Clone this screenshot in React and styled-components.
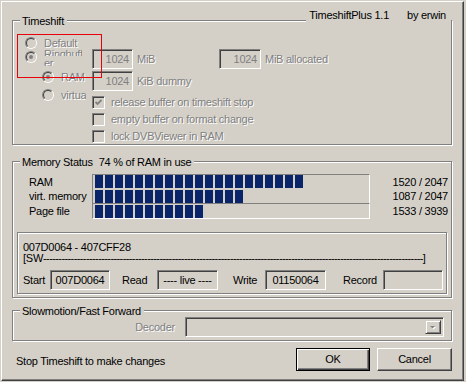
import React from 'react';
import styled, { createGlobalStyle, css } from 'styled-components';

const BG = '#d4d0c8';

const Global = createGlobalStyle`
  html, body { margin: 0; padding: 0; background: ${BG}; }
  body {
    font-family: "Liberation Sans", Arial, sans-serif;
    font-size: 11px;
    letter-spacing: -0.25px;
    color: #000;
  }
  #root { width: 466px; height: 382px; }
`;

const sunken = css`
  box-sizing: border-box;
  border: 1px solid;
  border-color: #808080 #fff #fff #808080;
  box-shadow: inset 1px 1px 0 #404040, inset -1px -1px 0 ${BG};
  background: ${BG};
`;

const etched = css`
  box-sizing: border-box;
  border: 1px solid #808080;
  box-shadow: inset 1px 1px 0 #fff, 1px 1px 0 #fff;
`;

const Screen = styled.div`
  width: 466px;
  height: 382px;
  box-sizing: border-box;
  padding: 1px 0 0 1px;
  background: ${BG};
`;

const Panel = styled.div`
  width: 463px;
  height: 380px;
  box-sizing: border-box;
  border-style: solid;
  border-width: 1px;
  border-color: #fff #404040 #404040 #fff;
  box-shadow: inset -1px -1px 0 #808080;
  padding: 18px 10px 0 10px;
  display: flex;
  flex-direction: column;
`;

const Group = styled.div`
  ${etched};
  position: relative;
  width: 440px;
  height: ${p => p.$h}px;
  margin-top: ${p => p.$mt || 0}px;
  flex: none;
`;

const Legend = styled.div`
  position: absolute;
  top: -7px;
  left: 7px;
  padding: 0 3px 0 2px;
  line-height: 14px;
  background: ${BG};
  white-space: nowrap;
  display: flex;
  gap: 6px;
`;

const TitleTag = styled.div`
  position: absolute;
  top: -13px;
  right: 0;
  padding: 0 5px 0 3px;
  line-height: 14px;
  background: ${BG};
  white-space: nowrap;
  display: flex;
  gap: 18px;
`;

const Highlight = styled.div`
  position: absolute;
  left: 4px;
  top: 13px;
  width: 85px;
  height: 44px;
  box-sizing: border-box;
  border: 1px solid #e8000b;
  pointer-events: none;
`;

const Label = styled.span`
  box-sizing: border-box;
  white-space: nowrap;
  line-height: 13px;
  flex: none;
  ${p => p.$disabled && css`color: #808080; text-shadow: 1px 1px 0 #fff;`}
  ${p => p.$w && css`width: ${p.$w}px;`}
  ${p => p.$pl && css`padding-left: ${p.$pl}px;`}
  ${p => p.$clip && css`overflow: hidden;`}
`;

/* ---------- Timeshift group ---------- */

const TimeshiftBody = styled.div`
  display: flex;
  align-items: flex-start;
  padding: 15px 0 0 12px;
`;

const RadioCol = styled.div`
  width: 67px;
  flex: none;
  display: flex;
  flex-direction: column;
`;

const RadioRow = styled.div`
  height: 14px;
  display: flex;
  align-items: center;
  gap: 7px;
  margin-top: ${p => p.$mt || 0}px;
  padding-left: ${p => p.$indent || 0}px;
`;

const RadioOuter = styled.span`
  flex: none;
  width: 12px;
  height: 12px;
  box-sizing: border-box;
  border-radius: 50%;
  border: 1px solid;
  border-color: #808080 #fff #fff #808080;
  display: flex;
`;

const RadioInner = styled.span`
  flex: 1;
  border-radius: 50%;
  border: 1px solid;
  border-color: #404040 ${BG} ${BG} #404040;
  background: ${BG};
  display: flex;
  align-items: center;
  justify-content: center;
`;

const RadioDot = styled.span`
  width: 4px;
  height: 4px;
  border-radius: 50%;
  background: #808080;
`;

const Radio = ({ checked }) => (
  <RadioOuter>
    <RadioInner>{checked && <RadioDot />}</RadioInner>
  </RadioOuter>
);

const WrapLabel = styled.span`
  align-self: flex-start;
  margin-top: -2px;
  width: 38px;
  display: flex;
  flex-direction: column;
  color: #808080;
  text-shadow: 1px 1px 0 #fff;
`;

const ClipLine = styled.span`
  height: ${p => p.$h}px;
  margin-top: ${p => p.$mt || 0}px;
  overflow: hidden;
  line-height: 13px;
  white-space: nowrap;
`;

const RightCol = styled.div`
  display: flex;
  flex-direction: column;
  margin-top: 13px;
`;

const EditRow = styled.div`
  height: 20px;
  display: flex;
  align-items: center;
  margin-bottom: 2px;
`;

const Edit = styled.div`
  ${sunken};
  flex: none;
  width: ${p => p.$w}px;
  height: 20px;
  text-align: right;
  padding-right: 3px;
  line-height: 18px;
  color: #808080;
`;

const CheckRow = styled.div`
  height: 17px;
  display: flex;
  align-items: center;
  gap: 6px;
  margin-top: ${p => p.$mt || 0}px;
`;

const CheckBox = styled.span`
  ${sunken};
  flex: none;
  width: 13px;
  height: 13px;
  display: flex;
  align-items: center;
  justify-content: center;
`;

const Check = ({ checked }) => (
  <CheckBox>
    {checked && (
      <svg width="7" height="7" viewBox="0 0 7 7">
        <polyline points="0.5,3 2.5,5 6.5,1" fill="none" stroke="#808080" strokeWidth="1.8" />
      </svg>
    )}
  </CheckBox>
);

/* ---------- Memory group ---------- */

const MemoryBody = styled.div`
  padding: 12px 0 0 0;
  display: flex;
  flex-direction: column;
`;

const MeterRow = styled.div`
  display: flex;
  align-items: stretch;
  height: ${p => p.$h}px;
`;

const MeterLabel = styled.div`
  width: 79px;
  flex: none;
  box-sizing: border-box;
  padding-left: 16px;
  display: flex;
  align-items: center;
  line-height: 13px;
  white-space: nowrap;
`;

const Track = styled.div`
  width: 278px;
  flex: none;
  box-sizing: border-box;
  border-left: 1px solid #808080;
  border-right: 1px solid #fff;
  padding-left: 2px;
  display: flex;
  gap: 2px;
  align-items: flex-start;
  ${p => p.$pos === 'first' && css`border-top: 1px solid #808080;`}
  ${p => p.$pos === 'last' && css`
    border-top: 1px solid #808080;
    border-bottom: 1px solid #fff;
    padding-top: 1px;
  `}
`;

const Block = styled.span`
  flex: none;
  width: 8px;
  height: 13px;
  background: #0a246a;
`;

const MeterValue = styled.div`
  flex: 1;
  box-sizing: border-box;
  padding-right: 3px;
  display: flex;
  align-items: center;
  justify-content: flex-end;
  line-height: 13px;
  white-space: nowrap;
`;

const SubBox = styled.div`
  ${etched};
  margin: 13px 0 0 4px;
  width: 430px;
  height: 62px;
  padding: 9px 0 0 5px;
`;

const InfoLine = styled.div`
  line-height: 11px;
  white-space: nowrap;
`;

const DashLine = styled.div`
  line-height: 11px;
  display: flex;
  white-space: nowrap;
`;

const Dashes = styled.span`
  flex: none;
  letter-spacing: -0.6px;
`;

const FieldRow = styled.div`
  margin-top: 6px;
  height: 20px;
  display: grid;
  grid-template-columns: 27px 60px 47px 61px 47px 61px 57px 60px;
  align-items: center;
`;

const FieldBox = styled.div`
  ${sunken};
  height: 20px;
  line-height: 18px;
  text-align: center;
  white-space: nowrap;
  overflow: hidden;
`;

/* ---------- Slowmotion group ---------- */

const SlowBody = styled.div`
  padding: 6px 7px 0 0;
  display: flex;
  justify-content: flex-end;
  align-items: center;
  gap: 10px;
`;

const Combo = styled.div`
  ${sunken};
  width: 259px;
  height: 20px;
  padding: 2px;
  display: flex;
  justify-content: flex-end;
`;

const DropBtn = styled.div`
  width: 16px;
  box-sizing: border-box;
  border: 1px solid;
  border-color: ${BG} #404040 #404040 ${BG};
  box-shadow: inset 1px 1px 0 #fff, inset -1px -1px 0 #808080;
  display: flex;
  align-items: center;
  justify-content: center;
`;

/* ---------- Footer ---------- */

const Footer = styled.div`
  margin-top: 7px;
  width: 440px;
  display: flex;
  align-items: center;
  justify-content: space-between;
`;

const FooterText = styled.span`
  margin: 3px 0 0 4px;
  line-height: 13px;
  white-space: nowrap;
`;

const Buttons = styled.div`
  display: flex;
  gap: 7px;
`;

const Button = styled.button`
  box-sizing: border-box;
  width: ${p => p.$w}px;
  height: 23px;
  padding: 0;
  font: inherit;
  letter-spacing: inherit;
  color: #000;
  background: ${BG};
  line-height: 13px;
  ${p => p.$default
    ? css`
      border: 1px solid #000;
      box-shadow: inset 1px 1px 0 #fff, inset -1px -1px 0 #404040, inset -2px -2px 0 #808080;
    `
    : css`
      border: 1px solid;
      border-color: #fff #404040 #404040 #fff;
      box-shadow: inset -1px -1px 0 #808080;
    `}
`;

const meters = [
  { label: 'RAM', used: 1520, total: 2047, h: 16, pos: 'first' },
  { label: 'virt. memory', used: 1087, total: 2047, h: 13, pos: 'mid' },
  { label: 'Page file', used: 1533, total: 3939, h: 16, pos: 'last' },
];

const fields = [
  { label: 'Start', pl: 0, value: '007D0064' },
  { label: 'Read', pl: 12, value: '---- live ----' },
  { label: 'Write', pl: 15, value: '01150064' },
  { label: 'Record', pl: 17, value: '' },
];

export default function App() {
  return (
    <>
      <Global />
      <Screen>
        <Panel>
          <Group $h={125}>
            <Legend>Timeshift</Legend>
            <TitleTag>
              <span>TimeshiftPlus 1.1</span>
              <span>by erwin</span>
            </TitleTag>
            <TimeshiftBody>
              <RadioCol>
                <RadioRow>
                  <Radio />
                  <Label $disabled>Default</Label>
                </RadioRow>
                <RadioRow>
                  <Radio checked />
                  <WrapLabel>
                    <ClipLine $h={8}>Ringbuff</ClipLine>
                    <ClipLine $h={9} $mt={1}>er</ClipLine>
                  </WrapLabel>
                </RadioRow>
                <RadioRow $mt={6} $indent={17}>
                  <Radio checked />
                  <Label $disabled>RAM</Label>
                </RadioRow>
                <RadioRow $mt={4} $indent={17}>
                  <Radio />
                  <Label $disabled $clip $w={25}>virtual</Label>
                </RadioRow>
              </RadioCol>
              <RightCol>
                <EditRow>
                  <Edit $w={41}>1024</Edit>
                  <Label $disabled $w={86} $pl={4}>MiB</Label>
                  <Edit $w={42}>1024</Edit>
                  <Label $disabled $pl={4}>MiB allocated</Label>
                </EditRow>
                <EditRow>
                  <Edit $w={41}>1024</Edit>
                  <Label $disabled $pl={4}>KiB dummy</Label>
                </EditRow>
                <CheckRow $mt={1}>
                  <Check checked />
                  <Label $disabled>release buffer on timeshift stop</Label>
                </CheckRow>
                <CheckRow>
                  <Check />
                  <Label $disabled>empty buffer on format change</Label>
                </CheckRow>
                <CheckRow>
                  <Check />
                  <Label $disabled>lock DVBViewer in RAM</Label>
                </CheckRow>
              </RightCol>
            </TimeshiftBody>
            <Highlight />
          </Group>

          <Group $h={137} $mt={16}>
            <Legend>
              <span>Memory Status</span>
              <span>74 % of RAM in use</span>
            </Legend>
            <MemoryBody>
              {meters.map(m => {
                const n = Math.ceil((m.used / m.total) * 276 / 10);
                return (
                  <MeterRow key={m.label} $h={m.h}>
                    <MeterLabel>{m.label}</MeterLabel>
                    <Track $pos={m.pos}>
                      {Array.from({ length: n }, (_, i) => <Block key={i} />)}
                    </Track>
                    <MeterValue>{m.used} / {m.total}</MeterValue>
                  </MeterRow>
                );
              })}
              <SubBox>
                <InfoLine>007D0064 - 407CFF28</InfoLine>
                <DashLine>
                  <span>[SW</span>
                  <Dashes>{'-'.repeat(124)}</Dashes>
                  <span>]</span>
                </DashLine>
                <FieldRow>
                  {fields.map(f => (
                    <React.Fragment key={f.label}>
                      <Label $pl={f.pl}>{f.label}</Label>
                      <FieldBox>{f.value}</FieldBox>
                    </React.Fragment>
                  ))}
                </FieldRow>
              </SubBox>
            </MemoryBody>
          </Group>

          <Group $h={31} $mt={12}>
            <Legend>Slowmotion/Fast Forward</Legend>
            <SlowBody>
              <Label $disabled>Decoder</Label>
              <Combo>
                <DropBtn>
                  <svg width="8" height="5" viewBox="0 0 8 5">
                    <polygon points="1,1 6,1 3.5,3.5" fill="#fff" transform="translate(1,1)" />
                    <polygon points="1,1 6,1 3.5,3.5" fill="#808080" />
                  </svg>
                </DropBtn>
              </Combo>
            </SlowBody>
          </Group>

          <Footer>
            <FooterText>Stop Timeshift to make changes</FooterText>
            <Buttons>
              <Button $default $w={74}>OK</Button>
              <Button $w={75}>Cancel</Button>
            </Buttons>
          </Footer>
        </Panel>
      </Screen>
    </>
  );
}
